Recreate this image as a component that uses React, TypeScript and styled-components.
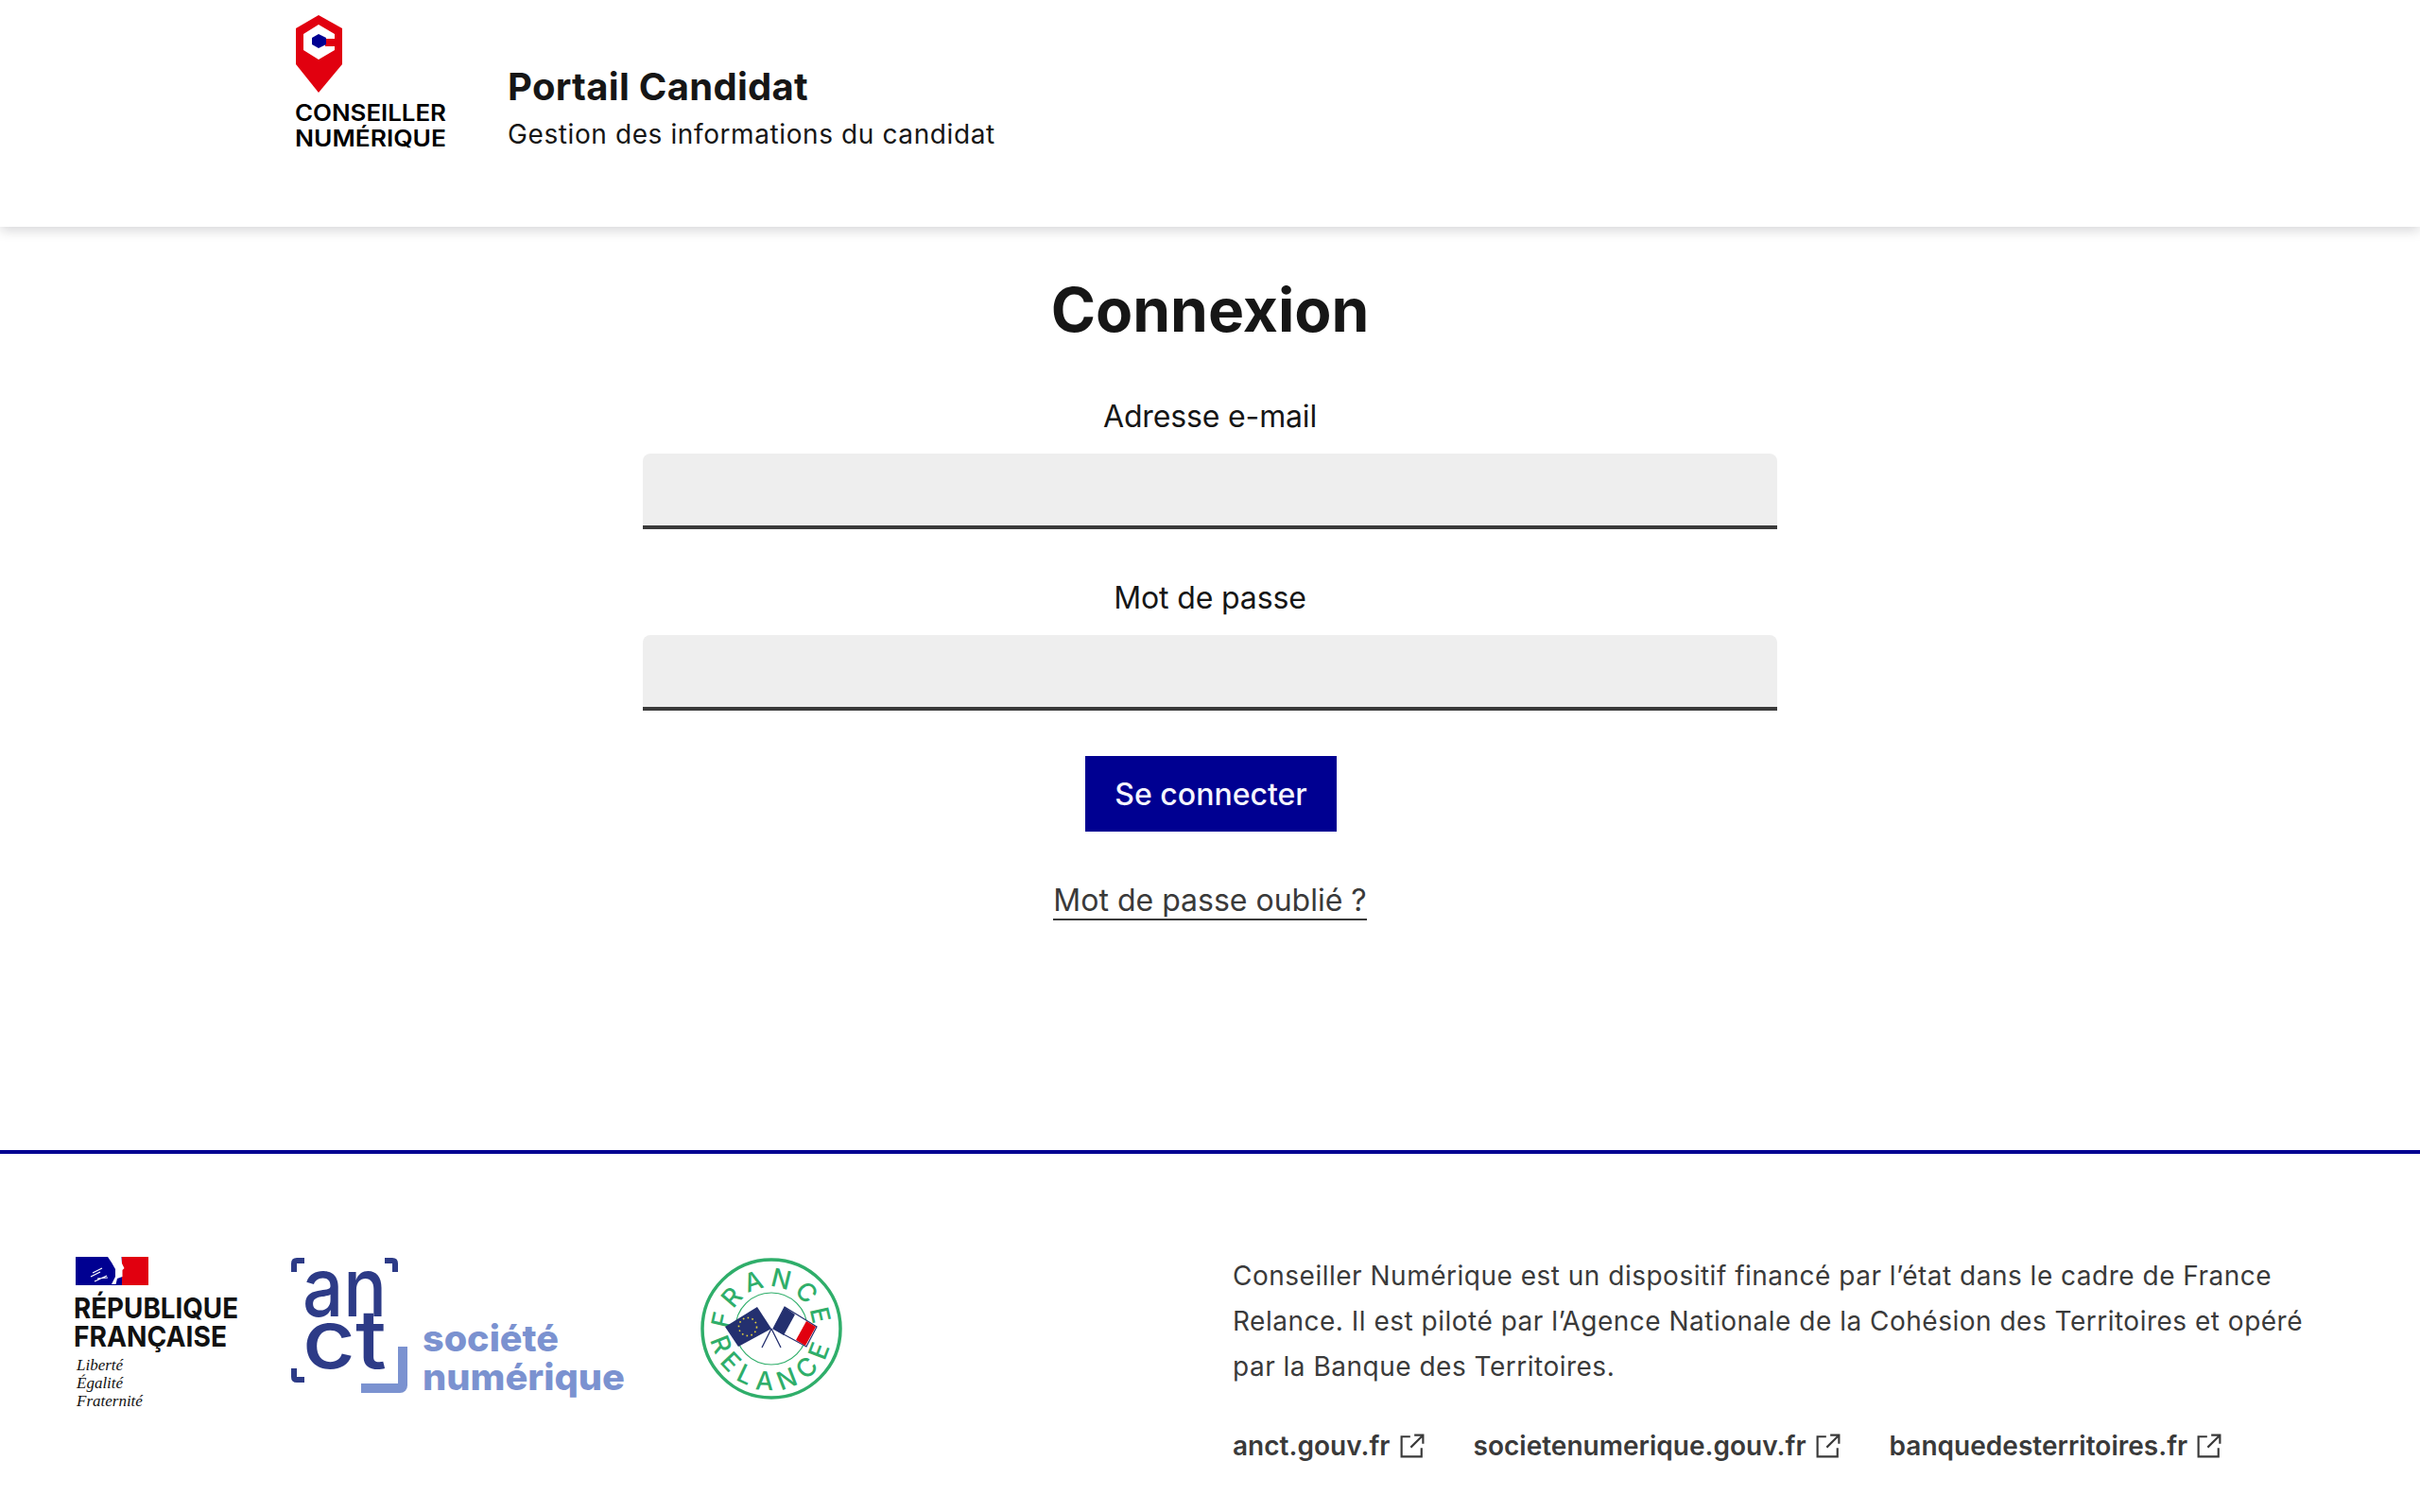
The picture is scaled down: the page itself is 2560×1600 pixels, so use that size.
import { ReactElement } from "react";
import styled, { createGlobalStyle } from "styled-components";

const GlobalStyle = createGlobalStyle`
  * {
    box-sizing: border-box;
  }

  html,
  body {
    margin: 0;
    background: #fff;
    font-family: "Inter", "Noto Sans", sans-serif;
    color: #161616;
  }
`;

const Page = styled.div`
  display: flex;
  flex-direction: column;
  width: 2560px;
  height: 1600px;
  overflow: hidden;
`;

const Header = styled.header`
  display: flex;
  align-items: flex-start;
  gap: 57px;
  height: 240px;
  padding-left: 310px;
  padding-top: 14px;
  box-shadow: 0 4px 12px rgba(0, 0, 18, 0.16);
`;

const LogoSvg = styled.svg`
  display: block;
  flex: none;
  overflow: visible;
`;

const Brand = styled.div`
  display: flex;
  flex-direction: column;
  padding-top: 52px;
`;

const BrandTitle = styled.div`
  font-size: 40px;
  line-height: 52px;
  font-weight: 700;
  letter-spacing: 0.3px;
`;

const BrandText = styled.div`
  margin-top: 4px;
  font-size: 28px;
  line-height: 40px;
  letter-spacing: 0.6px;
`;

const Main = styled.main`
  flex: 1;
  display: flex;
  flex-direction: column;
  align-items: center;
`;

const Title = styled.h1`
  margin: 48px 0 0;
  font-size: 64px;
  line-height: 80px;
  font-weight: 700;
`;

const LoginForm = styled.form`
  display: flex;
  flex-direction: column;
  align-items: center;
  width: 1200px;
  margin-top: 48px;
`;

const Field = styled.div`
  display: flex;
  flex-direction: column;
  align-items: center;
  width: 100%;
  margin-bottom: 48px;
`;

const FieldLabel = styled.label`
  font-size: 32px;
  line-height: 50px;
  margin-bottom: 14px;
  letter-spacing: -0.15px;
`;

const TextInput = styled.input`
  display: block;
  width: 100%;
  height: 80px;
  border: 0;
  border-bottom: 4px solid #3a3a3a;
  border-radius: 8px 8px 0 0;
  background: #eee;
`;

const SubmitButton = styled.button`
  height: 80px;
  width: 266px;
  margin-left: 2px;
  border: 0;
  background: #000091;
  color: #f5f5fe;
  font-family: inherit;
  font-size: 32px;
  font-weight: 500;
`;

const ForgotLink = styled.a`
  margin-top: 54px;
  font-size: 32px;
  line-height: 38px;
  color: #3a3a3a;
  border-bottom: 2px solid #3a3a3a;
`;

const Footer = styled.footer`
  display: flex;
  height: 383px;
  border-top: 4px solid #000091;
  padding: 105px 0 0 76px;
`;

const FooterLogos = styled.div`
  display: flex;
  align-items: flex-start;
  width: 1228px;
  flex: none;
`;

const FooterInfo = styled.div`
  display: flex;
  flex-direction: column;
  width: 1170px;
`;

const FooterText = styled.p`
  margin: 0;
  font-size: 28px;
  line-height: 48px;
  color: #3a3a3a;
  letter-spacing: 0.5px;
`;

const FooterLinks = styled.ul`
  display: flex;
  gap: 52px;
  margin: 36px 0 0;
  padding: 0;
  list-style: none;
`;

const FooterLink = styled.a`
  display: flex;
  align-items: center;
  gap: 10px;
  font-size: 28px;
  line-height: 48px;
  font-weight: 600;
  color: #3a3a3a;
  letter-spacing: 0.02px;
`;

function CandidatLogo(): ReactElement {
  return (
    <LogoSvg width="170" height="150" viewBox="310 14 170 150">
      <path
        fill="#e1000f"
        d="M337 16 L362 30 L362 68 L337 98 L313 68 L313 30 Z"
      />
      <path
        fill="#fff"
        d="M337 26 L354 36 L354 41 L344 41 L344 49 L354 49 L354 53 L337 63 L321 53 L321 36 Z"
      />
      <path
        fill="#000091"
        d="M337 36 L345 40 L345 47 L337 51 L330 47 L330 40 Z"
      />
      <g fontFamily="Inter, sans-serif" fontWeight="600" fontSize="24" fill="#000">
        <text x="312" y="128" textLength="160" lengthAdjust="spacingAndGlyphs">
          CONSEILLER
        </text>
        <text x="312" y="155" textLength="160" lengthAdjust="spacingAndGlyphs">
          NUMÉRIQUE
        </text>
      </g>
    </LogoSvg>
  );
}

function RepubliqueLogo(): ReactElement {
  return (
    <LogoSvg width="228" height="164" viewBox="76 1325 228 164">
      <rect x="80" y="1329" width="77" height="30" fill="#e1000f" />
      <rect x="80" y="1329" width="49" height="30" fill="#000091" />
      <path
        fill="#fff"
        d="M114 1329 L128.5 1329 L129 1336 L131.5 1341 L129.5 1343 L129.5 1350 L124 1352 L122.5 1358 L118 1358 L122 1350 L122 1342 L118 1335 Z"
      />
      <path
        stroke="#fff"
        strokeWidth="1.2"
        fill="none"
        d="M96 1350 L106 1345 M98 1346 L108 1341 M100 1355 L113 1349 M103 1352 L114 1351"
      />
      <g fontFamily="Inter, sans-serif" fontWeight="700" fontSize="30" fill="#111">
        <text x="78" y="1394" textLength="174" lengthAdjust="spacingAndGlyphs">
          RÉPUBLIQUE
        </text>
        <text x="78" y="1424" textLength="162" lengthAdjust="spacingAndGlyphs">
          FRANÇAISE
        </text>
      </g>
      <g
        fontFamily="'Liberation Serif', serif"
        fontStyle="italic"
        fontSize="17"
        fill="#111"
      >
        <text x="81" y="1449">Liberté</text>
        <text x="81" y="1468">Égalité</text>
        <text x="81" y="1487">Fraternité</text>
      </g>
    </LogoSvg>
  );
}

function AnctLogo(): ReactElement {
  return (
    <LogoSvg width="432" height="180" viewBox="304 1325 432 180">
      <g fill="none" stroke="#2d3b87" strokeWidth="6">
        <path d="M322 1333 L314 1333 Q311 1333 311 1336 L311 1345" />
        <path d="M407 1333 L415 1333 Q418 1333 418 1336 L418 1345" />
        <path d="M311 1447 L311 1456 Q311 1459 314 1459 L322 1459" />
      </g>
      <path
        d="M382 1468 L423 1468 Q426 1468 426 1465 L426 1424"
        fill="none"
        stroke="#7b92d0"
        strokeWidth="10"
      />
      <g fontFamily="Inter, sans-serif" fontWeight="500" fontSize="86" fill="#2d3b87">
        <text x="320" y="1392" textLength="89" lengthAdjust="spacingAndGlyphs">
          an
        </text>
        <text x="320" y="1447" textLength="89" lengthAdjust="spacingAndGlyphs">
          ct
        </text>
      </g>
      <g fontFamily="Inter, sans-serif" fontWeight="800" fontSize="39" fill="#7b92d0">
        <text x="447" y="1429" textLength="144" lengthAdjust="spacingAndGlyphs">
          société
        </text>
        <text x="447" y="1470" textLength="214" lengthAdjust="spacingAndGlyphs">
          numérique
        </text>
      </g>
    </LogoSvg>
  );
}

function RelanceLogo(): ReactElement {
  return (
    <LogoSvg width="160" height="160" viewBox="735 1325 160 160">
      <defs>
        <path id="arc-top" d="M815 1449 A44 44 0 1 1 815 1361 A44 44 0 1 1 815 1449" />
        <path id="arc-bottom" d="M815 1340 A65 65 0 1 0 815 1470 A65 65 0 1 0 815 1340" />
      </defs>
      <circle cx="815" cy="1405" r="73" fill="#fff" stroke="#2fae6a" strokeWidth="3.5" />
      <circle cx="815" cy="1405" r="38" fill="none" stroke="#2fae6a" strokeWidth="1.2" />
      <g fontFamily="Inter, sans-serif" fontWeight="500" fontSize="27" fill="#2fae6a">
        <text letterSpacing="5">
          <textPath href="#arc-top" startOffset="50%" textAnchor="middle">
            FRANCE
          </textPath>
        </text>
        <text letterSpacing="8">
          <textPath href="#arc-bottom" startOffset="50%" textAnchor="middle">
            RELANCE
          </textPath>
        </text>
      </g>
      <path d="M815 1405 L805 1425 M815 1405 L825 1425" stroke="#24306f" strokeWidth="1.3" />
      <path fill="#24306f" d="M766 1403 L800 1382 L815 1405 L780 1424 Z" />
      <path fill="#fff" stroke="#24306f" strokeWidth="1.2" d="M829 1382 L863 1403 L852 1424 L817 1405 Z" />
      <path fill="#24306f" d="M829 1382 L840 1390 L828 1412 L817 1405 Z" />
      <path fill="#e1000f" d="M852 1397 L862 1403 L851 1423 L841 1417 Z" />
      <circle cx="790" cy="1403" r="9.5" fill="none" stroke="#e8d53a" strokeWidth="1.6" strokeDasharray="1.6 3.3" />
    </LogoSvg>
  );
}

function ExternalIcon(): ReactElement {
  return (
    <svg width="26" height="26" viewBox="0 0 24 24" fill="none" stroke="#3a3a3a" strokeWidth="2">
      <path d="M10 3 L1.5 3 L1.5 22.5 L21 22.5 L21 14" />
      <path d="M14 1.5 L22.5 1.5 L22.5 10 M22 2 L10.5 13.5" />
    </svg>
  );
}

function App(): ReactElement {
  return (
    <Page>
      <GlobalStyle />
      <Header>
        <CandidatLogo />
        <Brand>
          <BrandTitle>Portail Candidat</BrandTitle>
          <BrandText>Gestion des informations du candidat</BrandText>
        </Brand>
      </Header>
      <Main>
        <Title>Connexion</Title>
        <LoginForm>
          <Field>
            <FieldLabel htmlFor="email">Adresse e-mail</FieldLabel>
            <TextInput id="email" type="email" />
          </Field>
          <Field>
            <FieldLabel htmlFor="password">Mot de passe</FieldLabel>
            <TextInput id="password" type="password" />
          </Field>
          <SubmitButton type="button">Se connecter</SubmitButton>
          <ForgotLink>Mot de passe oublié ?</ForgotLink>
        </LoginForm>
      </Main>
      <Footer>
        <FooterLogos>
          <RepubliqueLogo />
          <AnctLogo />
          <RelanceLogo />
        </FooterLogos>
        <FooterInfo>
          <FooterText>
            Conseiller Numérique est un dispositif financé par l’état dans le cadre de France
            Relance. Il est piloté par l’Agence Nationale de la Cohésion des Territoires et opéré
            par la Banque des Territoires.
          </FooterText>
          <FooterLinks>
            <li>
              <FooterLink>
                anct.gouv.fr <ExternalIcon />
              </FooterLink>
            </li>
            <li>
              <FooterLink>
                societenumerique.gouv.fr <ExternalIcon />
              </FooterLink>
            </li>
            <li>
              <FooterLink>
                banquedesterritoires.fr <ExternalIcon />
              </FooterLink>
            </li>
          </FooterLinks>
        </FooterInfo>
      </Footer>
    </Page>
  );
}

export default App;
